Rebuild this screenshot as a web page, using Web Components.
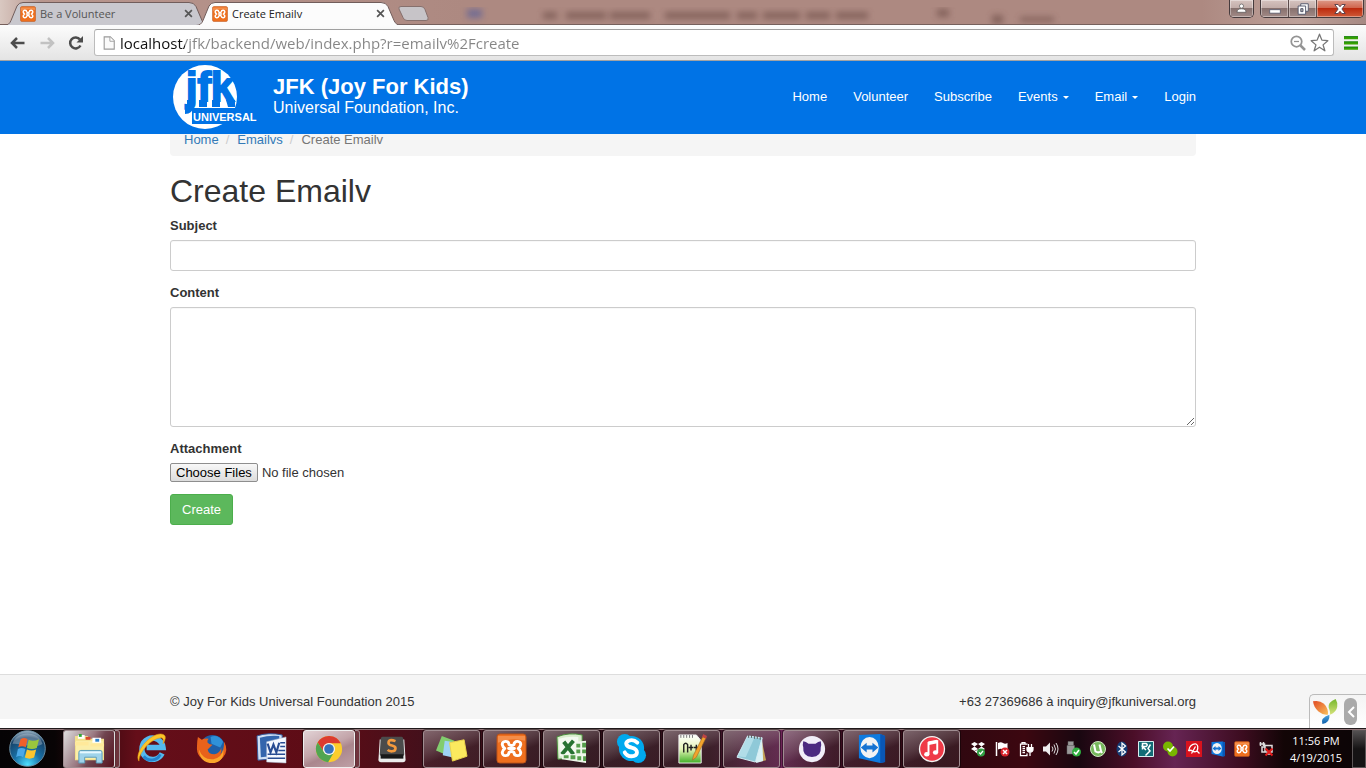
<!DOCTYPE html>
<html lang="en">
<head>
<meta charset="utf-8">
<title>Create Emailv</title>
<style>
html,body{margin:0}
body{font-family:"Liberation Sans",Arial,sans-serif;font-size:13px;line-height:18px;color:#333;background:#fff}
</style>
</head>
<body>
<desk-top></desk-top>
<script>
const define = (name, html) => {
  const t = document.createElement('template');
  t.innerHTML = html;
  customElements.define(name, class extends HTMLElement {
    constructor(){ super(); this.attachShadow({mode:'open'}).append(t.content.cloneNode(true)); }
  });
};

/* ---------- icons, all on a 32 unit grid ---------- */
const icons = {
  xampp:'<rect x="1" y="1" width="30" height="30" rx="3" fill="#ee6f1e" stroke="#b9531a" stroke-width="1"/><path d="M2 3h28v5q-14-4-28 2z" fill="#f79b5c" opacity=".7"/><path d="M13.500 12C13 7 6 8 6.500 12q.500 2.500 2.500 4-2 1.500-2.500 4C6 24 13 25 13.500 20M18.500 12c.500-5 7.500-4 7 0q-.500 2.500-2.500 4 2 1.500 2.500 4c.500 4-6.500 5-7 0M13.500 12q2.500 2 5 0M13.500 20q2.500-2 5 0M13 16h6" fill="none" stroke="#fff" stroke-width="3" stroke-linejoin="round" stroke-linecap="round"/>',
  back:'<path d="M29 16H6M14 6L4 16l10 10" fill="none" stroke="#4c4c4c" stroke-width="5"/>',
  forward:'<path d="M3 16h23M18 6l10 10-10 10" fill="none" stroke="#c2c2c2" stroke-width="5"/>',
  reload:'<path d="M25 21a11 11 0 1 1-1-12" fill="none" stroke="#4c4c4c" stroke-width="5"/><path d="M30 2v13H17z" fill="#4c4c4c"/>',
  page:'<path d="M5 2h14l9 9v19H5z" fill="#fafafa" stroke="#9a9a9a" stroke-width="2.500"/><path d="M18 2v10h10" fill="#fff" stroke="#9a9a9a" stroke-width="2"/>',
  zoomout:'<circle cx="13" cy="13" r="10.500" fill="none" stroke="#949494" stroke-width="3.500"/><path d="M8 13h10" stroke="#949494" stroke-width="2.500"/><path d="M21 21l9 9" stroke="#949494" stroke-width="5"/>',
  star:'<path d="M16 2l4 10 10 1-8 7 3 10-9-6-9 6 3-10-8-7 10-1z" fill="#fff" stroke="#777" stroke-width="2.200" stroke-linejoin="round"/>',
  menu:'<path d="M0 4h32M0 16h32M0 28h32" stroke="#38a300" stroke-width="7"/><path d="M0 1.500h32M0 13.500h32M0 25.500h32" stroke="#157b17" stroke-width="2"/>',
  close:'<path d="M4 4l24 24M28 4L4 28" stroke="#555" stroke-width="6"/>',
  user:'<circle cx="16" cy="9" r="6" fill="#fff" stroke="#555" stroke-width="2"/><path d="M3 27c0-7 4-10 13-10s13 3 13 10z" fill="#fff" stroke="#555" stroke-width="2"/>',
  min:'<rect x="2" y="18" width="28" height="9" fill="#fff" stroke="#52566b" stroke-width="2"/>',
  restore:'<path d="M10 2h20v20H10z" fill="#fff" stroke="#52566b" stroke-width="2.500"/><path d="M3 8h20v22H3z" fill="#fff" stroke="#52566b" stroke-width="2.500"/><path d="M10 15h6v8h-6z" fill="#aaa" stroke="#52566b" stroke-width="2.500"/>',
  winclose:'<path d="M2 4h9l5 6 5-6h9l-9 12 9 12h-9l-5-6-5 6H2l9-12z" fill="#fff" stroke="#573f4a" stroke-width="2.500"/>',
  start:'<defs><radialGradient id="o" cx=".5" cy=".95" r=".95"><stop offset="0" stop-color="#4fe0ff"/><stop offset=".4" stop-color="#1871a8"/><stop offset=".8" stop-color="#174268"/><stop offset="1" stop-color="#a3b9c9"/></radialGradient></defs><circle cx="16" cy="16" r="15.400" fill="url(#o)" stroke="#6f93a8" stroke-width=".8"/><path d="M3 12C6 0 26 0 29 12 21 17 11 11 3 12z" fill="#fff" opacity=".28"/><path d="M10 8q3-2 6 0l-1.500 7q-3-2-6.500 0z" fill="#f0602a"/><path d="M17 8.500q4 2 9-.5l-2 7.500q-4 2-8.500 0z" fill="#9ac63c"/><path d="M7.700 16.500q3-2 6.500 0l-2 7q-3-2-6 0z" fill="#4aa8e8"/><path d="M15.500 16.800q4 2 8 0l-1.800 7q-4 2-8 0z" fill="#fbc52e"/>',
  explorer:'<path d="M1 3h13l2 3h15v22H1z" fill="#f4e08c"/><path d="M2 8h28v19H2z" fill="#fbeea9"/><path d="M4 2h7v4H4zM19 5h9v5h-9z" fill="#fff"/><path d="M5 1h3v3H5z" fill="#2fa832"/><path d="M12 4h5v3h-5z" fill="#d9472b"/><path d="M22 6h4v3h-4z" fill="#2d82cc"/><path d="M1 9h14v4H1zM17 11h14v3H17z" fill="#ffe99a"/><path d="M5 31V20q0-2 2-2h20q2 0 2 2v11h-6v-6H11v6z" fill="#9fd3ea" stroke="#5b9dbb"/><path d="M6 20h22" stroke="#e7f8ff" stroke-width="2"/>',
  ie:'<path d="M27 21a11 11 0 1 1 1-6H11" fill="none" stroke="#55b9ee" stroke-width="5.500"/><path d="M25 22a10 10 0 0 1-17 2" fill="none" stroke="#2484cf" stroke-width="3"/><path d="M3 29C-3 19 19-4 29 2q3 2-1 9 1-6-2-6C16 5 3 20 3 29z" fill="#fbc52a" stroke="#e79a12" stroke-width=".6"/>',
  firefox:'<circle cx="17" cy="15" r="13" fill="#1e5fa8"/><path d="M15 4q8-3 13 5l-3 6-9-4z" fill="#2f91d8"/><path d="M2 4l4 3q3-2 7-1-2 2-1 4 2 2 5 2l-5 5q1 5 7 5 6-1 7-7 1 4-1 7 4-3 4-13 5 9-1 16-6 7-15 5Q0 26 1 14q0-6 1-10z" fill="#e8621b"/><path d="M3 17q4 11 15 10 9-2 10-10 2 11-9 14Q4 32 3 17z" fill="#fba62b"/>',
  word:'<path d="M1 3q12-4 26-1v24L2 28z" fill="#cfe0f5" stroke="#34589c"/><path d="M4 5q9-3 20-2v20L5 25z" fill="#3365ad"/><path d="M11 9l20-5v27l-20-1z" fill="#f5f8ff" stroke="#aab8d0" stroke-width=".5"/><path d="M12 11l3 9 3-8 3 8 3-10" fill="none" stroke="#284c93" stroke-width="2.200"/><path d="M25 10h5M25 14h5M23 18h7M12 22h18M12 26h18" stroke="#284c93" stroke-width="1.500"/>',
  chrome:'<circle cx="16" cy="16" r="15" fill="#fccd2c"/><path d="M3 8.500A15 15 0 0 1 29.500 9.500H16a7 7 0 0 0-6 10z" fill="#dc3b30"/><path d="M3 8.500A15 15 0 0 0 15 31l7-12a7 7 0 0 1-12 0z" fill="#51a551"/><circle cx="16" cy="16" r="7" fill="#f2f2f2"/><circle cx="16" cy="16" r="5.500" fill="#3672bc"/>',
  sublime:'<path d="M2 5h28l1.500 23q0 3-3 3h-25q-3 0-3-3z" fill="#ececec"/><path d="M5 2h22q2 0 2 3l1 17q0 2-2 2H4q-2 0-2-2L3 5q0-3 2-3z" fill="#4b4b4b"/><path d="M3 22h26v5H3z" fill="#191919"/><path d="M20 7q-8-3-8 2c0 4 8 2 8 6 0 5-7 4-9 2" fill="none" stroke="#f49a3d" stroke-width="3"/>',
  notes:'<path d="M6 3l13 5-5 16L0 18z" fill="#82cd6e"/><path d="M9 8l14 2-2 16-14-3z" fill="#9ed3f5"/><path d="M14 10l15-3 3 17-15 5z" fill="#fbe95e" stroke="#ead34a"/>',
  excel:'<path d="M1 4q12-5 26-2v23L2 27z" fill="#d8edcc" stroke="#488f3a"/><path d="M3 6q9-3 20-2v19L4 24z" fill="#f3f9ef"/><path d="M8 9l10 13M18 8L6 22" stroke="#277231" stroke-width="4"/><path d="M20 9l11-1v23l-25-4v-5h14z" fill="#eff7eb"/><path d="M21 11h4v4h-4zM27 10h4v5h-4zM21 17h4v4h-4zM27 17h4v4h-4zM8 23h5v3H8zM15 23h5v4h-5zM22 24h4v4h-4zM28 24h3v5h-3z" fill="#559e4b"/>',
  skype:'<circle cx="16" cy="16" r="13" fill="#00a9ee"/><circle cx="9" cy="9" r="8" fill="#00a9ee"/><circle cx="23" cy="23" r="8" fill="#00a9ee"/><path d="M22 10q-4-4-9-2c-4 2-3 6 3 7 8 2 7 9 0 9q-5 0-7-4" fill="none" stroke="#fff" stroke-width="4" stroke-linecap="round"/>',
  npp:'<defs><linearGradient id="n" x2="0" y2="1"><stop stop-color="#fff"/><stop offset=".5" stop-color="#e5f5b7"/><stop offset="1" stop-color="#3fae25"/></linearGradient></defs><path d="M3 2h18l5 6v23H3z" fill="url(#n)" stroke="#eee"/><path d="M5 2v3M8 2v3M11 2v3M14 2v3M17 2v3" stroke="#777"/><path d="M8 20v-8q2-3 4 0v8M13 15h5M15.500 12v6M18.500 15h5M21 12v6" fill="none" stroke="#222" stroke-width="1.500"/><path d="M28 3l3 2-10 20-4 3 1-5z" fill="#f2a32c" stroke="#9c6720" stroke-width=".6"/><path d="M28 1l4 2-1 3-4-2z" fill="#bd4545"/>',
  notepad:'<path d="M26 5l5 23-7 2z" fill="#c5a35b"/><path d="M12 3l15 2 1 24-7 2z" fill="#d9f0f5"/><path d="M12 3l15 2-7 25L1 25z" fill="#8fc9d8" stroke="#d6eef5"/><path d="M12 4l7 1-9 20-9-1z" fill="#bfe6ef" opacity=".7"/><path d="M13 2v3M16 2v3M19 3v3M22 3v3M25 4v3" stroke="#5b5b5b"/>',
  github:'<circle cx="16" cy="16" r="15" fill="#f1eef8"/><path d="M6 7q3 0 6 3h8q3-3 6-3 1 4 0 7 1 11-10 11T6 14q-1-3 0-7z" fill="#4b2a80"/>',
  tv:'<path d="M3 2l22-1 5 2v27l-5 1-22-5z" fill="#0f7be0"/><path d="M25 1l5 2v27l-5 1z" fill="#0a56b5"/><ellipse cx="14" cy="15" rx="9.500" ry="11" fill="#f3f3f3"/><path d="M5 15l6-5v3h6v-3l6 5-6 5v-3h-6v3z" fill="#1673d2"/>',
  itunes:'<circle cx="16" cy="16" r="15" fill="#f5f5f5"/><circle cx="16" cy="16" r="13.500" fill="#ef3a47"/><path d="M12 22V9l10-2v13" fill="none" stroke="#fff" stroke-width="2.200"/><path d="M12 9.500l10-2" stroke="#fff" stroke-width="4"/><ellipse cx="10" cy="22" rx="3" ry="2.500" fill="#fff"/><ellipse cx="20" cy="20" rx="3" ry="2.500" fill="#fff"/>',
  dropbox:'<path d="M9 2l7 4-7 5-7-5zM23 2l7 4-7 5-7-5zM9 11l7 5-7 4-7-4zM23 11l7 5-7 4-7-4zM9 21l7-4 7 4-7 5z" fill="#fff"/><circle cx="22" cy="23" r="8" fill="#2fa142"/><path d="M18 23l3 3 5-6" fill="none" stroke="#fff" stroke-width="2.500"/>',
  flag:'<path d="M5 2v28" stroke="#fff" stroke-width="3"/><path d="M8 4q6-3 10 0t9 0v13q-5 3-9 0t-10 0z" fill="#fff"/><circle cx="22" cy="22" r="9" fill="#d8232a"/><path d="M18 18l8 8M26 18l-8 8" stroke="#fff" stroke-width="3"/>',
  power:'<path d="M8 6V3h6v3M19 6h-14v23h13v-4M9 11h5M9 15h5M9 19h5M9 23h5" fill="none" stroke="#fff" stroke-width="2.500"/><path d="M18 13h12v4q0 5-6 5t-6-5zM21 6v7M27 6v7M24 22v8" fill="#fff" stroke="#fff" stroke-width="2.500"/>',
  sound:'<path d="M2 11h6l8-8v26l-8-8H2z" fill="#eee"/><path d="M20 11q4 5 0 10M24 7q6 9 0 18M28 4q8 12 0 24" fill="none" stroke="#ddd" stroke-width="2"/>',
  usb:'<path d="M4 1h11v8H4zM2 9h15v17H2z" fill="#999" stroke="#666"/><circle cx="21" cy="22" r="9" fill="#2eae3e"/><path d="M16 22l4 4 6-8" fill="none" stroke="#fff" stroke-width="3"/>',
  utorrent:'<circle cx="16" cy="16" r="15" fill="#77b85c" stroke="#cfe6c2" stroke-width="2"/><path d="M8 7l3 14q7 4 11-1l2 4M19 7l3 13" fill="none" stroke="#fff" stroke-width="4"/>',
  bluetooth:'<ellipse cx="16" cy="16" rx="11" ry="15" fill="#143c75"/><path d="M9 10l14 12-7 6V4l7 6L9 22" fill="none" stroke="#fff" stroke-width="2.500"/>',
  realtek:'<path d="M1 1h30v30H1z" fill="#126b76" stroke="#d8eef0" stroke-width="2"/><path d="M9 17V5h7q5 3 0 6H9l7 7M25 7l-5 8 4 5-9 9" fill="none" stroke="#fff" stroke-width="3"/>',
  messenger:'<circle cx="12" cy="11" r="10" fill="#78b500"/><circle cx="21" cy="21" r="10" fill="#78b500"/><path d="M11 15l5 5 8-9" fill="none" stroke="#fff" stroke-width="3.500"/>',
  avira:'<path d="M0 0h32v32H0z" fill="#d9121d"/><path d="M5 20Q8 5 20 6q6 3 2 14l5 5M5 20q4-3 8 0t9 0M19 11l-8 14" fill="none" stroke="#fff" stroke-width="2.500"/>',
  offline:'<path d="M5 2v8M11 2v8M3 6h10v6H8v10h6M14 9h14v13H14zM17 26h9" fill="none" stroke="#ddd" stroke-width="3"/><path d="M15 15l14 14M29 15L15 29" stroke="#e31b1b" stroke-width="4"/>',
  yii:'<defs><linearGradient id="y1" x2="1" y2="1"><stop stop-color="#e04a24"/><stop offset="1" stop-color="#fbc05a"/></linearGradient><linearGradient id="y2" x2="0" y2="1"><stop stop-color="#75b72c"/><stop offset="1" stop-color="#d5e27a"/></linearGradient><linearGradient id="y3" x2="0" y2="1"><stop stop-color="#52a6df"/><stop offset="1" stop-color="#0b5da9"/></linearGradient></defs><path d="M0 3q8-2 14 3 6 6 5 14-6 1-12-4Q1 11 0 3z" fill="url(#y1)"/><path d="M29 0q-10 4-9 11 2 4 2 9 8-3 9-10 1-5-2-10z" fill="url(#y2)"/><path d="M21 20q1 10-9 12-3-8 9-12z" fill="url(#y3)"/>'
};
customElements.define('ui-icon', class extends HTMLElement {
  constructor(){ super(); this.attachShadow({mode:'open'}); }
  connectedCallback(){
    const s = this.getAttribute('size') || 16;
    this.shadowRoot.innerHTML = `<style>:host{display:inline-flex;flex:none}svg{display:block;overflow:visible}</style><svg width="${s}" height="${s}" viewBox="0 0 32 32" aria-hidden="true">${icons[this.getAttribute('name')]}</svg>`;
  }
});

/* ---------- browser chrome ---------- */
define('browser-tab', `<style>
:host{display:flex;align-items:center;position:relative;box-sizing:border-box;width:204px;height:23px;padding:0 15px 0 16px;margin-right:-12px;font:11px/16px "Open Sans",sans-serif;color:#555;--fill:#c9c8ce}
:host([active]){--fill:#fcfcfc;color:#222;z-index:1}
.shape{position:absolute;inset:0;width:100%;height:100%}
.shape path{fill:var(--fill);stroke:#715d5b}
ui-icon,span,button{position:relative}
span{flex:1;margin-left:4px}
button{all:unset;display:flex;padding:4px 0}
</style><svg class="shape" viewBox="0 0 204 23"><path d="M0 23.500q5 0 7-5L13 4q2-3.500 6-3.500h166q5 0 7 4l6 14q2 5 8 5"/></svg>
<ui-icon name="xampp" size="16"></ui-icon><span><slot></slot></span><button aria-label="Close tab"><ui-icon name="close" size="9"></ui-icon></button>`);

define('window-controls', `<style>
:host{display:flex;gap:6px;align-self:flex-start;margin-right:2px}
div{display:flex;border:1px solid #463b3d;border-top:0;border-radius:0 0 5px 5px;overflow:hidden}
button{all:unset;display:flex;align-items:center;justify-content:center;width:27px;height:17px;background:linear-gradient(#d6c3bf,#c3aeaa 45%,#87716e 50%,#a28a86);border-right:1px solid #5c4b4a;box-shadow:inset 0 0 0 1px #ffffff60}
button:last-child{border:0}
.u{width:23px}.x{width:46px;background:linear-gradient(#dd9a89,#d0664e 45%,#bc2a0e 50%,#cf5a38)}
</style><div><button class="u" aria-label="User"><ui-icon name="user" size="11"></ui-icon></button></div>
<div><button aria-label="Minimize"><ui-icon name="min" size="12"></ui-icon></button><button aria-label="Restore"><ui-icon name="restore" size="12"></ui-icon></button><button class="x" aria-label="Close"><ui-icon name="winclose" size="12"></ui-icon></button></div>`);

define('tab-strip', `<style>
:host{display:flex;align-items:flex-end;height:25px;padding-left:4px;position:relative;background:linear-gradient(90deg,#d9c8c1,#b8968e 3%,#ad8981 34%,#ad8981 88%,#bda19a 95%,#a78983);box-shadow:inset 0 -1px #76605c}
.glass{position:absolute;inset:0;width:100%;height:24px}
.new{all:unset;width:31px;height:15px;margin:0 0 4px 10px;position:relative}
.new svg{display:block}
window-controls{margin-left:auto;position:relative}
</style><svg class="glass" aria-hidden="true"><filter id="b"><feGaussianBlur stdDeviation="3"/></filter><g filter="url(#b)" fill="#65453f" opacity=".55"><path fill="#4656a0" d="M467 9h15v9h-15z"/><path d="M543 12h14v7h-14zM566 12h40v7h-40zM610 12h40v7h-40zM665 12h65v7h-65zM737 12h20v7h-20zM763 12h37v7h-37zM806 12h24v7h-24zM836 12h32v7h-32zM937 9h12v8h-12zM992 15h11v9h-11zM1020 17h34v5h-34z"/></g></svg>
<browser-tab>Be a Volunteer</browser-tab><browser-tab active>Create Emailv</browser-tab>
<button class="new" aria-label="New tab"><svg width="31" height="15"><path d="M3 .5h20q3 0 4 3l3 8q1 3-2 3H9q-3 0-4-3L1 3Q0 .5 3 .5z" fill="#c7c4c8" stroke="#86706d"/></svg></button>
<window-controls></window-controls>`);

define('address-bar', `<style>
:host{display:flex;align-items:center;gap:10px;box-sizing:border-box;height:36px;padding:0 8px 0 10px;background:linear-gradient(#fcfcfc,#e4e4e4);border-bottom:1px solid #a3a3a3}
button{all:unset;display:flex}
.nav{display:flex;gap:13px}
form{flex:1;display:flex;align-items:center;gap:4px;box-sizing:border-box;height:27px;padding:0 4px 0 7px;background:#fff;border:1px solid #bcbcbc;border-top-color:#a0a0a0;border-radius:3px}
input{flex:1;min-width:0;border:0;outline:0;padding:0;height:22px;font:15px/22px "Open Sans",sans-serif;color:transparent;caret-color:#000;background:linear-gradient(90deg,#111 65px,#858585 65px);-webkit-background-clip:text;background-clip:text}
</style><div class="nav"><button aria-label="Back"><ui-icon name="back"></ui-icon></button><button aria-label="Forward"><ui-icon name="forward"></ui-icon></button><button aria-label="Reload"><ui-icon name="reload"></ui-icon></button></div>
<form><ui-icon name="page" size="14"></ui-icon><input aria-label="Address" value="localhost/jfk/backend/web/index.php?r=emailv%2Fcreate"><button type="button" aria-label="Zoom"><ui-icon name="zoomout"></ui-icon></button><button type="button" aria-label="Bookmark"><ui-icon name="star" size="19"></ui-icon></button></form>
<button aria-label="Menu"><ui-icon name="menu" size="14"></ui-icon></button>`);

/* ---------- site ---------- */
define('site-logo', `<style>:host{display:block}svg{display:block;overflow:visible}</style>
<svg width="86" height="66" viewBox="0 0 86 66" role="img" aria-label="JFK Universal"><circle cx="35" cy="33" r="32" fill="#fff"/><g fill="#0073e6"><text x="16" y="37" font-family="Liberation Sans" font-weight="700" font-size="41" stroke="#0073e6" stroke-width="2">jfk</text><path d="M22 44h48v16H22zM17 36h6v6q0 8-8 8v-5q2 0 2-4zM29 36h8v7h-8zM42 36h8v7h-8zM56 36h9v7h-7z"/></g><text x="23" y="57" font-family="Liberation Sans Narrow,Liberation Sans" font-weight="700" font-size="11" fill="#fff">UNIVERSAL</text></svg>`);

define('nav-link', `<style>:host{display:block}a{color:#fff;text-decoration:none}
:host([menu]) a::after{content:"";display:inline-block;margin-left:5px;vertical-align:middle;border:3px solid transparent;border-top-color:#fff;border-bottom:0}</style><a href="#"><slot></slot></a>`);

define('site-header', `<style>
:host{display:block;background:#0073e6;color:#fff;position:relative;z-index:1}
.in{box-sizing:border-box;max-width:1026px;height:73px;padding-bottom:2px;margin:auto;display:flex;align-items:center}
.brand{display:flex;align-items:center;gap:17px;color:#fff;text-decoration:none}
strong,small{display:block}strong{font-size:22px;line-height:22px}small{font-size:16px;line-height:20px}
nav{display:flex;gap:26px;margin-left:auto}
</style><div class="in"><a class="brand" href="#"><site-logo></site-logo><span><strong>JFK (Joy For Kids)</strong><small>Universal Foundation, Inc.</small></span></a><nav><slot></slot></nav></div>`);

define('crumb-trail', `<style>
:host{display:block;margin-top:-10px;padding:7px 14px;background:#f5f5f5;border-radius:4px;color:#777}
ol{display:flex;gap:7px;list-style:none;margin:0;padding:0}li+li::before{content:"/";color:#ccc;margin-right:8px}a{color:#337ab7;text-decoration:none}
</style><ol><li><a href="#">Home</a></li><li><a href="#">Emailvs</a></li><li>Create Emailv</li></ol>`);

define('email-form', `<style>
:host{display:block}
label{display:block;font-weight:700;margin-bottom:5px}
.field{margin-bottom:13px}.file{margin-bottom:12px}
.text{display:block;box-sizing:border-box;width:100%;height:31px;padding:5px 11px;font:inherit;color:#555;background:#fff;border:1px solid #ccc;border-radius:3px;box-shadow:inset 0 1px 1px #00000008}
textarea.text{height:120px;resize:vertical}
[type=file]{display:block;font:inherit;height:19px;color:#333}
::file-selector-button{box-sizing:border-box;height:19px;margin:0 4px 0 0;padding:0 5px;font:13px/17px "Liberation Sans",sans-serif;color:#000;border:1px solid #8e8e8e;border-radius:2px;background:linear-gradient(#f8f8f8,#dcdcdc)}
.create{height:31px;padding:0 11px;font:inherit;color:#fff;background:#5cb85c;border:1px solid #4cae4c;border-radius:3px}
</style><form><div class="field"><label for="s">Subject</label><input class="text" id="s"></div>
<div class="field"><label for="c">Content</label><textarea class="text" id="c"></textarea></div>
<div class="file"><label for="f">Attachment</label><input type="file" id="f" multiple></div><button class="create" type="button">Create</button></form>`);

define('site-footer', `<style>
:host{display:block;margin-top:auto;background:#f5f5f5;border-top:1px solid #ddd}
div{max-width:1026px;margin:auto;padding:18px 0 8px;display:flex;justify-content:space-between}
</style><div><span>© Joy For Kids Universal Foundation 2015</span><span>+63 27369686 à inquiry@jfkuniversal.org</span></div>`);

define('debug-bar', `<style>
:host{position:absolute;right:0;bottom:0;z-index:2;display:flex;align-items:center;gap:6px;box-sizing:border-box;height:34px;padding:0 9px 0 3px;background:linear-gradient(#f4f4f4,#fff);border:1px solid #bbb;border-width:1px 0 0 1px;border-radius:5px 0 0 0}
button{all:unset;display:flex;align-items:center;justify-content:center;width:13px;height:27px;border-radius:6px;background:#aaa}
</style><ui-icon name="yii" size="25"></ui-icon><button aria-label="Toggle debug toolbar"><svg width="8" height="12"><path d="M7 1L2 6l5 5" fill="none" stroke="#fff" stroke-width="2"/></svg></button>`);

define('web-page', `<style>
:host{flex:1;display:flex;flex-direction:column;position:relative;box-sizing:border-box;padding-bottom:9px;background:#fff}
main{width:100%;max-width:1026px;margin:0 auto 20px}
h1{margin:18px 0 8px;font-size:32px;line-height:35px;font-weight:400}
</style><site-header><nav-link>Home</nav-link><nav-link>Volunteer</nav-link><nav-link>Subscribe</nav-link><nav-link menu>Events</nav-link><nav-link menu>Email</nav-link><nav-link>Login</nav-link></site-header>
<main><crumb-trail></crumb-trail><h1>Create Emailv</h1><email-form></email-form></main><site-footer></site-footer><debug-bar></debug-bar>`);

/* ---------- taskbar ---------- */
define('task-button', `<style>
:host{display:flex;box-sizing:border-box;width:57px;height:38px}
button{all:unset;flex:1;display:flex;align-items:center;justify-content:center;box-sizing:border-box;border:1px solid transparent;border-radius:3px}
:host([open]) button{border-color:#a08d91;background:linear-gradient(160deg,#a89a9ea0,#7a686e80 40%,#4d3a4160 60%,#4a323960);box-shadow:0 0 0 1px #0006}
:host([stack]) button{border-right-color:#ddd}
:host([stack])::after{content:"";width:4px;border:1px solid #a08d91;border-left:0;border-radius:0 3px 3px 0;background:#8b5b6480}
:host([light]) button{background:linear-gradient(155deg,#e2d2d5,#c3a5aa 45%,#aa868d 60%,#bfa0a6);border-color:#eee}
:host([fade]) button{background:linear-gradient(120deg,#ddd,#997780 45%,#704550 60%,#55101c)}
</style><button><slot></slot></button>`);

customElements.define('running-apps', class extends HTMLElement {
  constructor(){
    super();
    const list = [['explorer','open stack fade'],['ie',''],['firefox',''],['word',''],['chrome','open stack light'],['sublime',''],...['notes','xampp','excel','skype','npp','notepad','github','tv','itunes'].map(n=>[n,'open'])];
    this.attachShadow({mode:'open'}).innerHTML = '<style>:host{display:flex;gap:3px}</style>' + list.map(([n,a])=>`<task-button ${a}><ui-icon name="${n}" size="${['chrome','sublime','github','itunes'].includes(n)?28:31}"></ui-icon></task-button>`).join('');
  }
});
customElements.define('tray-icons', class extends HTMLElement {
  constructor(){
    super();
    this.attachShadow({mode:'open'}).innerHTML = '<style>:host{display:flex;gap:8px}</style>' + ['dropbox','flag','power','sound','usb','utorrent','bluetooth','realtek','messenger','avira','tv','xampp','offline'].map(n=>`<ui-icon name="${n}" size="16"></ui-icon>`).join('');
  }
});

define('task-bar', `<style>
:host{display:flex;align-items:center;box-sizing:border-box;height:40px;border-top:1px solid #211a1c;box-shadow:inset 0 1px #94787c;color:#fff;background:linear-gradient(90deg,#050305 0,#080405 4%,#650e19 10%,#5d0c16 24%,#44101b 31%,#2a0c14 42%,#33101c 52%,#70265a 57%,#3b0d20 61%,#2d0810 69%,#3c0710 75%,#190710 79%,#4b0e28 83%,#662453 86%,#3c0c1f 91%,#120506 94%,#0b0506)}
.start{all:unset;display:flex;margin:0 17px 0 9px}
tray-icons{margin-left:auto}
time{font:11px/17px "Open Sans",sans-serif;text-align:center;margin:0 10px 0 16px}
.desk{all:unset;box-sizing:border-box;width:14px;height:38px;border:1px solid #5b5556;background:linear-gradient(#535051,#151314 50%)}
</style><button class="start" aria-label="Start"><ui-icon name="start" size="37"></ui-icon></button>
<running-apps></running-apps><tray-icons></tray-icons><time>11:56 PM<br>4/19/2015</time><button class="desk" aria-label="Show desktop"></button>`);

define('desk-top', `<style>
:host{display:flex;flex-direction:column;min-height:100vh}
</style><tab-strip></tab-strip><address-bar></address-bar><web-page></web-page><task-bar></task-bar>`);
</script>
</body>
</html>
